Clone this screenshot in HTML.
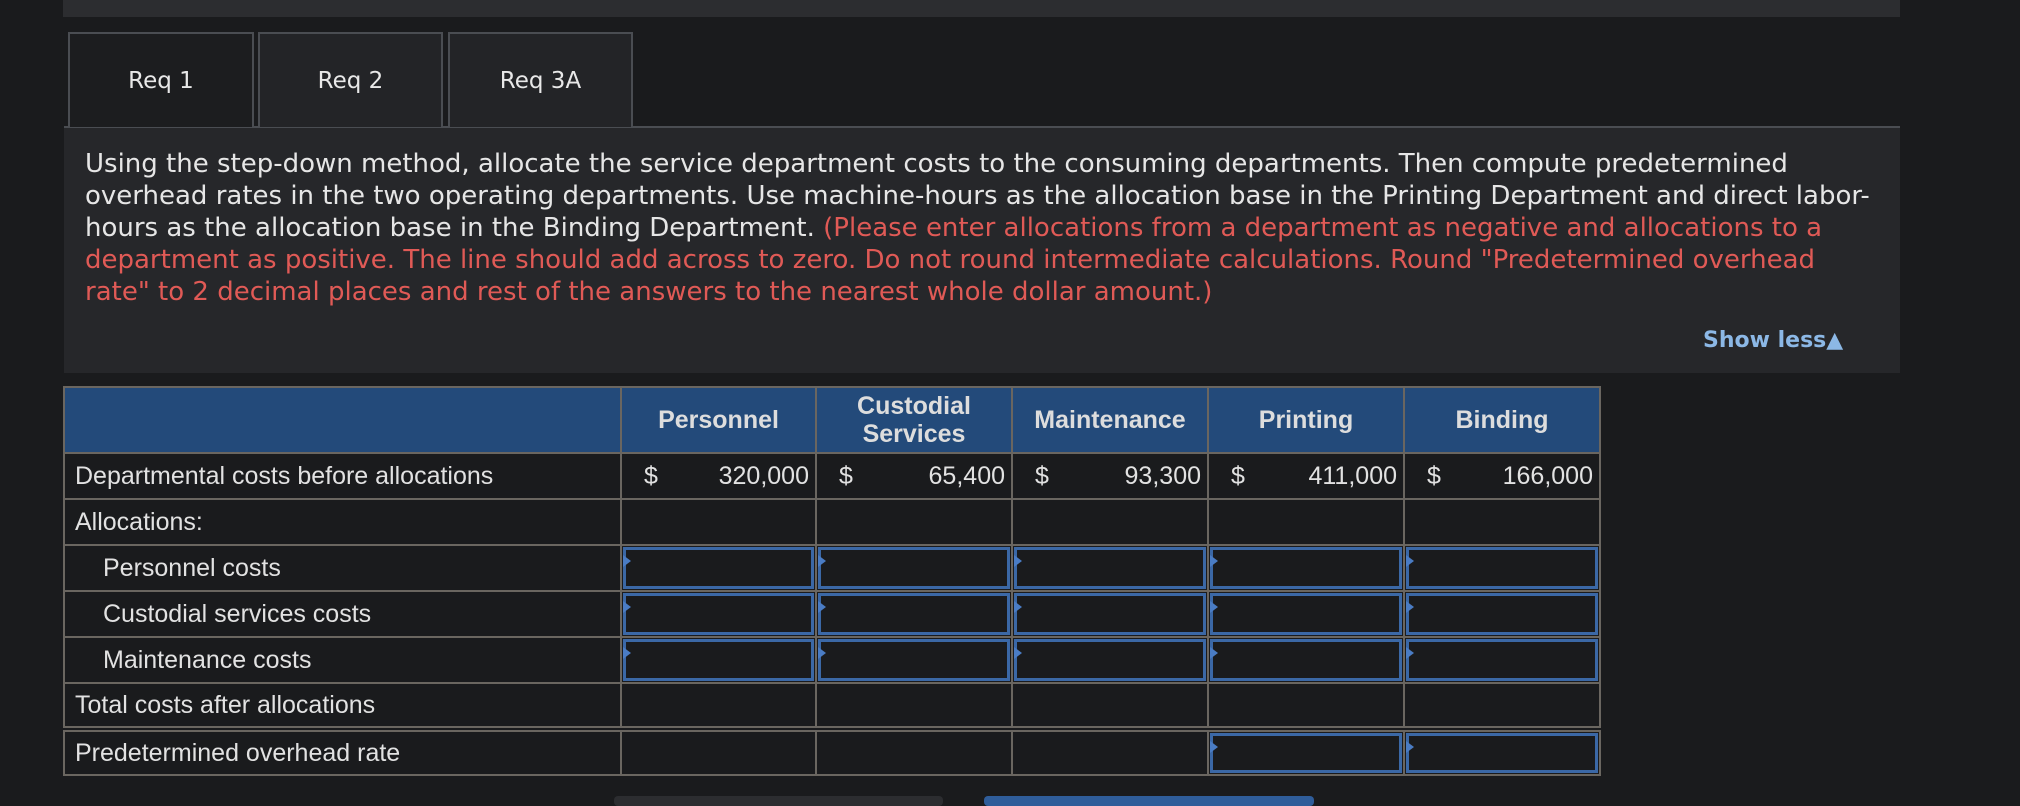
<!DOCTYPE html>
<html><head><style>
body{margin:0;width:2020px;height:800px;background:#1a1b1d;position:relative;overflow:hidden;font-family:"Liberation Sans",sans-serif;}
.a{position:absolute;}
.tab{position:absolute;top:32px;height:95px;border:2px solid #4a4d52;border-bottom:none;box-sizing:border-box;color:#e8e8e8;font-family:"DejaVu Sans",sans-serif;font-size:23px;text-align:center;line-height:95px;background:#232427;}
.desc{position:absolute;left:85px;top:148px;white-space:nowrap;font-family:"DejaVu Sans",sans-serif;font-size:26px;line-height:32px;color:#e6e6e6;letter-spacing:0px;}
.desc span{color:#e05a56;}
table{position:absolute;left:63px;top:386px;border-collapse:collapse;font-size:25px;color:#e2e2e2;}
td,th{border:2px solid #6a6660;padding:0;height:46px;box-sizing:border-box;position:relative;}
th{background:#234a7a;font-weight:bold;color:#ddd;height:66px;line-height:28px;}
td.l{padding-left:10px;}
td.i{padding-left:38px;}
.inp{position:absolute;left:1px;top:1px;right:1px;bottom:1px;border:3px solid #3b68a6;}
.inp:before{content:"";position:absolute;left:-3px;top:5px;border-left:8px solid #4a7cc4;border-top:6px solid transparent;border-bottom:6px solid transparent;}
.d{float:left;padding-left:22px;}
.v{float:right;padding-right:6px;}
</style></head><body>
<div class="a" style="left:63px;top:0;width:1837px;height:17px;background:#2c2d30"></div>
<div class="a" style="left:64px;top:126px;width:1836px;height:2px;background:#4a4d52"></div>
<div class="tab" style="left:68px;width:186px;background:#1c1d1f">Req 1</div>
<div class="tab" style="left:258px;width:185px">Req 2</div>
<div class="tab" style="left:448px;width:185px">Req 3A</div>
<div class="a" style="left:64px;top:128px;width:1836px;height:245px;background:#26272a"></div>
<div class="desc">Using the step-down method, allocate the service department costs to the consuming departments. Then compute predetermined<br>overhead rates in the two operating departments. Use machine-hours as the allocation base in the Printing Department and direct labor-<br>hours as the allocation base in the Binding Department. <span>(Please enter allocations from a department as negative and allocations to a<br>department as positive. The line should add across to zero. Do not round intermediate calculations. Round "Predetermined overhead<br>rate" to 2 decimal places and rest of the answers to the nearest whole dollar amount.)</span></div>
<div class="a" style="left:1703px;top:328px;font-family:'DejaVu Sans',sans-serif;font-weight:bold;font-size:22px;color:#8cb8e6">Show less▲</div>
<table>
<tr><th style="width:557px"></th><th style="width:195px">Personnel</th><th style="width:196px">Custodial<br>Services</th><th style="width:196px">Maintenance</th><th style="width:196px">Printing</th><th style="width:196px">Binding</th></tr>
<tr><td class="l">Departmental costs before allocations</td><td><span class="d">$</span><span class="v">320,000</span></td><td><span class="d">$</span><span class="v">65,400</span></td><td><span class="d">$</span><span class="v">93,300</span></td><td><span class="d">$</span><span class="v">411,000</span></td><td><span class="d">$</span><span class="v">166,000</span></td></tr>
<tr><td class="l">Allocations:</td><td></td><td></td><td></td><td></td><td></td></tr>
<tr><td class="i">Personnel costs</td><td><div class="inp"></div></td><td><div class="inp"></div></td><td><div class="inp"></div></td><td><div class="inp"></div></td><td><div class="inp"></div></td></tr>
<tr><td class="i">Custodial services costs</td><td><div class="inp"></div></td><td><div class="inp"></div></td><td><div class="inp"></div></td><td><div class="inp"></div></td><td><div class="inp"></div></td></tr>
<tr><td class="i">Maintenance costs</td><td><div class="inp"></div></td><td><div class="inp"></div></td><td><div class="inp"></div></td><td><div class="inp"></div></td><td><div class="inp"></div></td></tr>
<tr><td class="l" style="border-bottom:6px double #6a6660">Total costs after allocations</td><td style="border-bottom:6px double #6a6660"></td><td style="border-bottom:6px double #6a6660"></td><td style="border-bottom:6px double #6a6660"></td><td style="border-bottom:6px double #6a6660"></td><td style="border-bottom:6px double #6a6660"></td></tr>
<tr><td class="l">Predetermined overhead rate</td><td></td><td></td><td></td><td><div class="inp"></div></td><td><div class="inp"></div></td></tr>
</table>
<div class="a" style="left:614px;top:796px;width:329px;height:10px;background:#2c2d30;border-radius:4px"></div>
<div class="a" style="left:984px;top:796px;width:330px;height:10px;background:#2f5d9a;border-radius:4px"></div>
</body></html>
